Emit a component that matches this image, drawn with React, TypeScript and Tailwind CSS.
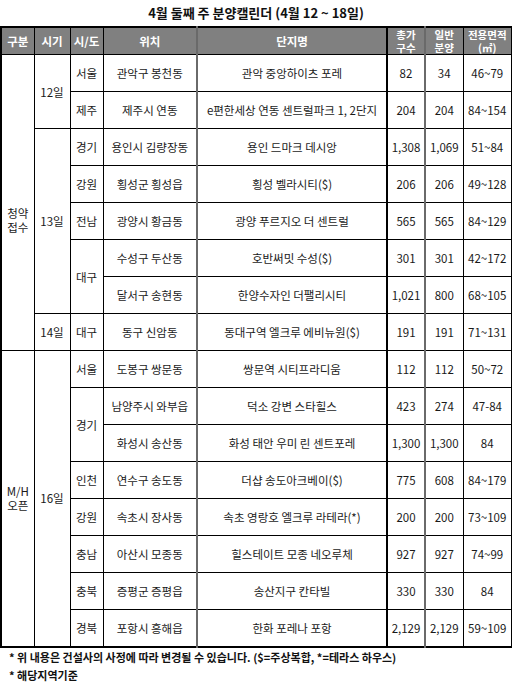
import React from "react";

type Row = {
  gubun?: { text: React.ReactNode; span: number; extra?: string };
  sigi?: { text: string; span: number };
  sido?: { text: string; span: number };
  loc: string;
  name: React.ReactNode;
  total: string;
  general: string;
  area: string;
};

const rows: Row[] = [
  {
    gubun: { text: <>청약<br />접수</>, span: 8, extra: "pt-[34px]" },
    sigi: { text: "12일", span: 2 },
    sido: { text: "서울", span: 1 },
    loc: "관악구 봉천동",
    name: "관악 중앙하이츠 포레",
    total: "82",
    general: "34",
    area: "46~79",
  },
  {
    sido: { text: "제주", span: 1 },
    loc: "제주시 연동",
    name: "e편한세상 연동 센트럴파크 1, 2단지",
    total: "204",
    general: "204",
    area: "84~154",
  },
  {
    sigi: { text: "13일", span: 5 },
    sido: { text: "경기", span: 1 },
    loc: "용인시 김량장동",
    name: "용인 드마크 데시앙",
    total: "1,308",
    general: "1,069",
    area: "51~84",
  },
  {
    sido: { text: "강원", span: 1 },
    loc: "횡성군 횡성읍",
    name: "횡성 벨라시티($)",
    total: "206",
    general: "206",
    area: "49~128",
  },
  {
    sido: { text: "전남", span: 1 },
    loc: "광양시 황금동",
    name: "광양 푸르지오 더 센트럴",
    total: "565",
    general: "565",
    area: "84~129",
  },
  {
    sido: { text: "대구", span: 2 },
    loc: "수성구 두산동",
    name: "호반써밋 수성($)",
    total: "301",
    general: "301",
    area: "42~172",
  },
  {
    loc: "달서구 송현동",
    name: "한양수자인 더팰리시티",
    total: "1,021",
    general: "800",
    area: "68~105",
  },
  {
    sigi: { text: "14일", span: 1 },
    sido: { text: "대구", span: 1 },
    loc: "동구 신암동",
    name: "동대구역 엘크루 에비뉴원($)",
    total: "191",
    general: "191",
    area: "71~131",
  },
  {
    gubun: { text: <>M/H<br />오픈</>, span: 8 },
    sigi: { text: "16일", span: 8 },
    sido: { text: "서울", span: 1 },
    loc: "도봉구 쌍문동",
    name: "쌍문역 시티프라디움",
    total: "112",
    general: "112",
    area: "50~72",
  },
  {
    sido: { text: "경기", span: 2 },
    loc: "남양주시 와부읍",
    name: "덕소 강변 스타힐스",
    total: "423",
    general: "274",
    area: "47-84",
  },
  {
    loc: "화성시 송산동",
    name: "화성 태안 우미 린 센트포레",
    total: "1,300",
    general: "1,300",
    area: "84",
  },
  {
    sido: { text: "인천", span: 1 },
    loc: "연수구 송도동",
    name: "더샵 송도아크베이($)",
    total: "775",
    general: "608",
    area: "84~179",
  },
  {
    sido: { text: "강원", span: 1 },
    loc: "속초시 장사동",
    name: "속초 영랑호 엘크루 라테라(*)",
    total: "200",
    general: "200",
    area: "73~109",
  },
  {
    sido: { text: "충남", span: 1 },
    loc: "아산시 모종동",
    name: "힐스테이트 모종 네오루체",
    total: "927",
    general: "927",
    area: "74~99",
  },
  {
    sido: { text: "충북", span: 1 },
    loc: "증평군 증평읍",
    name: "송산지구 칸타빌",
    total: "330",
    general: "330",
    area: "84",
  },
  {
    sido: { text: "경북", span: 1 },
    loc: "포항시 흥해읍",
    name: "한화 포레나 포항",
    total: "2,129",
    general: "2,129",
    area: "59~109",
  },
];

const font = { fontFamily: '"Noto Sans CJK KR", "Noto Sans", sans-serif' };

export default function App() {
  const cell = "border border-black text-center align-middle p-0 leading-[14px]";
  const th =
    "border border-black bg-[#808080] text-white font-bold text-center align-middle p-0 leading-[13px]";
  const th2 = `${th} text-[10.5px] leading-[12px]`;
  return (
    <div className="w-[512px] h-[697px] bg-white text-[#1a1a1a]" style={font}>
      <div className="h-[26px] flex items-center justify-center text-[13px] font-bold text-[#111]">
        4월 둘째 주 분양캘린더 (4월 12 ~ 18일)
      </div>
      <table className="w-[511px] table-fixed border-collapse text-[11.5px] border-2 border-black">
        <colgroup>
          <col className="w-[33px]" />
          <col className="w-[36px]" />
          <col className="w-[33px]" />
          <col className="w-[94px]" />
          <col className="w-[190px]" />
          <col className="w-[38px]" />
          <col className="w-[38px]" />
          <col className="w-[49px]" />
        </colgroup>
        <thead>
          <tr className="h-[26px]">
            <th className={th}>구분</th>
            <th className={th}>시기</th>
            <th className={th}>시/도</th>
            <th className={th}>위치</th>
            <th className={`${th} border-l-2 border-l-[#6a6a6a]`}>단지명</th>
            <th className={`${th2} border-l-2 border-l-black`}>
              <div>총가</div>
              <div>구수</div>
            </th>
            <th className={`${th2} border-l-2 border-l-[#6a6a6a]`}>
              <div>일반</div>
              <div>분양</div>
            </th>
            <th className={th2}>
              <div>전용면적</div>
              <div>(㎡)</div>
            </th>
          </tr>
        </thead>
        <tbody>
          {rows.map((r, i) => (
            <tr key={i} className="h-[37px]">
              {r.gubun && (
                <td rowSpan={r.gubun.span} className={`${cell} ${r.gubun.extra ?? ""}`}>
                  {r.gubun.text}
                </td>
              )}
              {r.sigi && (
                <td rowSpan={r.sigi.span} className={cell}>
                  {r.sigi.text}
                </td>
              )}
              {r.sido && (
                <td rowSpan={r.sido.span} className={cell}>
                  {r.sido.text}
                </td>
              )}
              <td className={cell}>{r.loc}</td>
              <td className={`${cell} border-l-2 border-l-[#6a6a6a] whitespace-nowrap`}>{r.name}</td>
              <td className={`${cell} border-l-2 border-l-black`}>{r.total}</td>
              <td className={`${cell} border-l-2 border-l-[#6a6a6a]`}>{r.general}</td>
              <td className={cell}>{r.area}</td>
            </tr>
          ))}
        </tbody>
      </table>
      <div className="pl-[9px] pt-0 text-[11px] font-bold text-[#111] leading-[18px]">
        <div>* 위 내용은 건설사의 사정에 따라 변경될 수 있습니다. ($=주상복합, *=테라스 하우스)</div>
        <div>* 해당지역기준</div>
      </div>
    </div>
  );
}
